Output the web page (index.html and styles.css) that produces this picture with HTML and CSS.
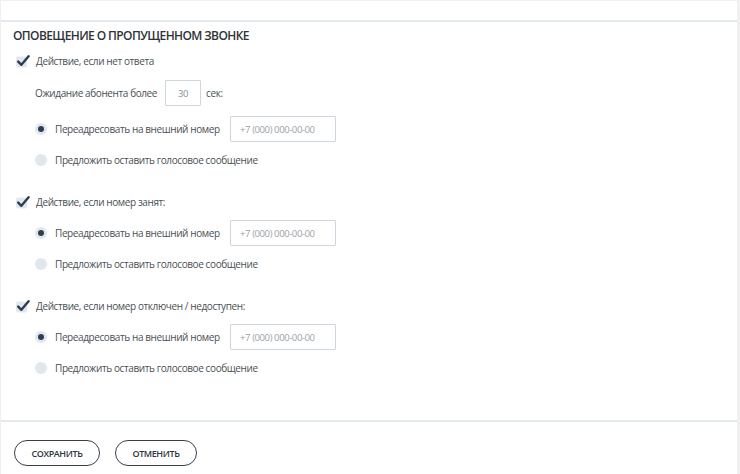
FILE: index.html
```html
<!DOCTYPE html>
<html lang="ru">

<head>
    <meta charset="UTF-8">
    <meta name="viewport" content="width=device-width, initial-scale=1.0">
    <title>Оповещение о пропущенном звонке</title>

    <link rel="stylesheet" href="styles.css">
</head>

<body>
    <div class="panel">
        <div class="panel-top"></div>

        <div class="notify">
            <h2 class="notify-title">Оповещение о пропущенном звонке</h2>

            <!-- нет ответа -->
            <div class="notify-group">
                <label class="check">
                    <svg class="check-box" width="16" height="14" viewBox="0 0 16 14">
                        <rect x="0" y="2.5" width="11" height="11" rx="2" fill="#e3e8ee" />
                        <path d="M2.2 7.6 L5.4 10.8 L12.6 2.2" fill="none" stroke="#2c3e50" stroke-width="2.4" stroke-linecap="round" stroke-linejoin="round" />
                    </svg>
                    <span>Действие, если нет ответа</span>
                </label>
                <div class="wait-row">
                    <span>Ожидание абонента более</span>
                    <input class="input-sec" type="text" value="30">
                    <span>сек:</span>
                </div>
                <div class="radio-row">
                    <span class="radio is-on"></span>
                    <span class="radio-label">Переадресовать на внешний номер</span>
                    <input class="input-phone" type="text" placeholder="+7 (000) 000-00-00">
                </div>
                <div class="radio-row radio-row-last">
                    <span class="radio"></span>
                    <span class="radio-label">Предложить оставить голосовое сообщение</span>
                </div>
            </div>

            <!-- номер занят -->
            <div class="notify-group">
                <label class="check">
                    <svg class="check-box" width="16" height="14" viewBox="0 0 16 14">
                        <rect x="0" y="2.5" width="11" height="11" rx="2" fill="#e3e8ee" />
                        <path d="M2.2 7.6 L5.4 10.8 L12.6 2.2" fill="none" stroke="#2c3e50" stroke-width="2.4" stroke-linecap="round" stroke-linejoin="round" />
                    </svg>
                    <span>Действие, если номер занят:</span>
                </label>
                <div class="radio-row">
                    <span class="radio is-on"></span>
                    <span class="radio-label">Переадресовать на внешний номер</span>
                    <input class="input-phone" type="text" placeholder="+7 (000) 000-00-00">
                </div>
                <div class="radio-row radio-row-last">
                    <span class="radio"></span>
                    <span class="radio-label">Предложить оставить голосовое сообщение</span>
                </div>
            </div>

            <!-- недоступен -->
            <div class="notify-group">
                <label class="check">
                    <svg class="check-box" width="16" height="14" viewBox="0 0 16 14">
                        <rect x="0" y="2.5" width="11" height="11" rx="2" fill="#e3e8ee" />
                        <path d="M2.2 7.6 L5.4 10.8 L12.6 2.2" fill="none" stroke="#2c3e50" stroke-width="2.4" stroke-linecap="round" stroke-linejoin="round" />
                    </svg>
                    <span>Действие, если номер отключен / недоступен:</span>
                </label>
                <div class="radio-row">
                    <span class="radio is-on"></span>
                    <span class="radio-label">Переадресовать на внешний номер</span>
                    <input class="input-phone" type="text" placeholder="+7 (000) 000-00-00">
                </div>
                <div class="radio-row radio-row-last">
                    <span class="radio"></span>
                    <span class="radio-label">Предложить оставить голосовое сообщение</span>
                </div>
            </div>
        </div>

        <div class="actions">
            <button type="button" class="btn">Сохранить</button>
            <button type="button" class="btn">Отменить</button>
        </div>
    </div>
</body>

</html>
```

FILE: styles.css
```css
/* common */
* {
    box-sizing: border-box;
}

html,
body {
    margin: 0;
    padding: 0;
}

body {
    background: #f0f0f0;
    font-family: "Open Sans", "Liberation Sans", sans-serif;
    font-size: 10px;
    letter-spacing: -0.4px;
    color: #4a4f55;
}

h2 {
    margin: 0;
}

input,
button {
    font-family: inherit;
    letter-spacing: inherit;
}

/* panel */
.panel {
    width: 736px;
    margin: 1px 0 0 1px;
    background: #fff;
}

.panel-top {
    height: 21px;
    border-bottom: 2px solid #e2e9ef;
}

.notify {
    padding: 6px 12px 44px;
    border-bottom: 2px solid #e2e9ef;
}

.notify-title {
    font-size: 12px;
    line-height: 16px;
    font-weight: 600;
    color: #2f3338;
    text-transform: uppercase;
    letter-spacing: -0.6px;
}

.notify-group {
    margin-top: 9px;
}

.notify-group + .notify-group {
    margin-top: 26px;
}

.check {
    display: flex;
    align-items: center;
    gap: 4px;
    height: 16px;
    padding-left: 3px;
    white-space: nowrap;
}

.check-box {
    display: block;
    margin-top: -1px;
}

.wait-row {
    display: flex;
    align-items: center;
    gap: 5px;
    margin: 11px 0 0 22px;
    height: 26px;
    white-space: nowrap;
}

.wait-row .input-sec {
    margin-left: 3px;
}

.input-sec,
.input-phone {
    height: 26px;
    border: 1px solid #cfd7de;
    border-radius: 1px;
    font-size: 9.5px;
    color: #8a8f95;
    outline: none;
}

.input-sec {
    width: 36px;
    text-align: center;
    padding: 0;
}

.input-phone {
    width: 106px;
    padding: 0 0 0 9px;
}

.input-phone::placeholder {
    color: #9ba1a6;
}

.radio-row {
    display: flex;
    align-items: center;
    min-height: 16px;
    margin: 10px 0 0 22px;
    white-space: nowrap;
}

.radio-row-last {
    margin-top: 10px;
}

.radio {
    position: relative;
    width: 12px;
    height: 12px;
    border-radius: 50%;
    background: #e2e7ed;
    margin-right: 8px;
    flex: none;
}

.radio.is-on::after {
    content: "";
    position: absolute;
    left: 3px;
    top: 3px;
    width: 6px;
    height: 6px;
    border-radius: 50%;
    background: #2c3e50;
}

.radio-label {
    width: 175px;
}

.radio-row-last .radio-label {
    width: auto;
}

/* buttons */
.actions {
    display: flex;
    gap: 15px;
    padding: 18px 13px 30px;
}

.btn {
    height: 26px;
    padding: 0 16.5px;
    border: 1.5px solid #34404c;
    border-radius: 13px;
    background: #fff;
    font-size: 9px;
    font-weight: 600;
    color: #2c3742;
    text-transform: uppercase;
    letter-spacing: -0.4px;
    cursor: pointer;
}
```
